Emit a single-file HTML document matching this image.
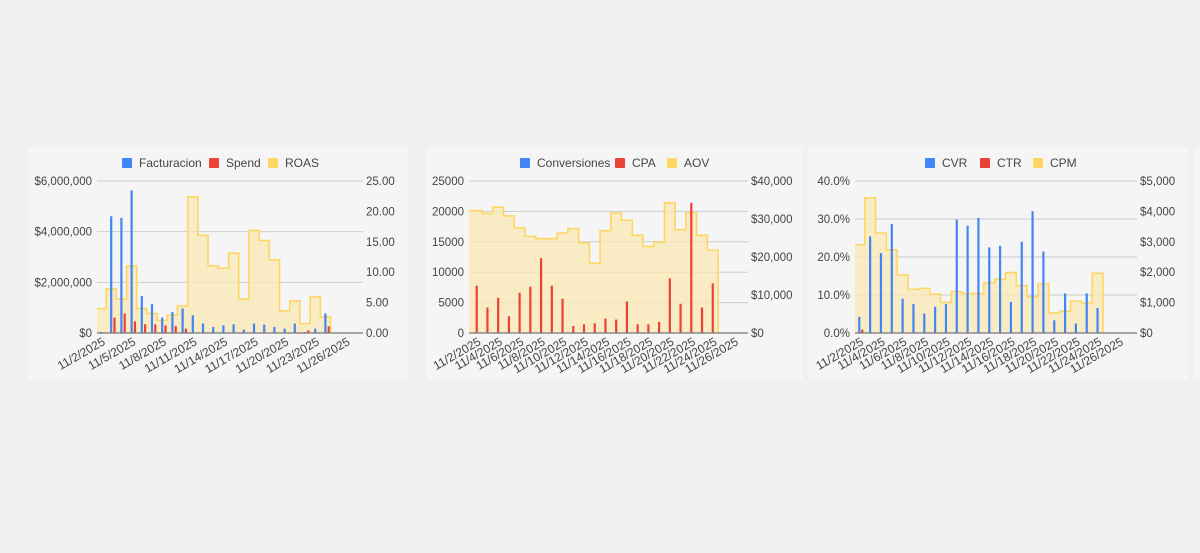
<!DOCTYPE html>
<html><head><meta charset="utf-8">
<style>
html,body{margin:0;padding:0;background:#f0f0f0;width:1200px;height:553px;overflow:hidden}
svg{position:absolute;left:0;top:0}
text{font-family:"Liberation Sans",sans-serif;fill:#444;font-size:11.5px}
</style></head><body>
<svg id="s" width="1200" height="553" xmlns="http://www.w3.org/2000/svg">
<rect x="28" y="147" width="380" height="233" fill="#f5f5f5"/>
<rect x="427" y="147" width="376" height="233" fill="#f5f5f5"/>
<rect x="808" y="147" width="380" height="233" fill="#f5f5f5"/>
<rect x="1194" y="147" width="6" height="233" fill="#f5f5f5"/>
</svg>
<script>
const s=document.getElementById('s');
let h='';
function T(x,y,t,a,extra){h+=`<text x="${x}" y="${y}" text-anchor="${a||'start'}" ${extra||''}>${t}</text>`;}
function chart(c){
  const top=181,bot=333;
  c.lt.forEach((t,k)=>{const y=top+(bot-top)*k/(c.lt.length-1);h+=`<line x1="${c.x0}" x2="${c.x1}" y1="${y}" y2="${y}" stroke="#ccc" stroke-width="1"/>`;T(c.x0-5,y+4,t,'end');});
  c.rt.forEach((t,k)=>{const y=top+(bot-top)*k/(c.rt.length-1);T(c.x1+3,y+4,t,'start');});
  const w=c.dx;let d=`M${c.x0} ${bot}`;
  c.area.forEach((v,i)=>{const xl=i==0?c.x0:c.c0+w*i-w/2, xr=c.c0+w*i+w/2;const y=bot-(bot-top)*v;d+=` L${xl} ${y} L${xr} ${y}`;});
  const xe=c.c0+w*(c.area.length-1)+w/2;
  h+=`<path d="${d} L${xe} ${bot} Z" fill="#f9e8b4" fill-opacity="0.75"/>`;
  let l='';c.area.forEach((v,i)=>{const xl=i==0?c.x0:c.c0+w*i-w/2, xr=c.c0+w*i+w/2;const y=bot-(bot-top)*v;l+=(i==0?'M':' L')+`${xl} ${y} L${xr} ${y}`;});
  h+=`<path d="${l} L${xe} ${bot}" fill="none" stroke="#fdd663" stroke-width="1.6"/>`;
  c.blue.forEach((v,i)=>{if(v<=0)return;const x=c.c0+w*i;const y=bot-(bot-top)*v;h+=`<rect x="${x-1.1}" y="${y}" width="2.2" height="${bot-y}" fill="#4285f4"/>`;});
  c.red.forEach((v,i)=>{if(v<=0)return;const x=c.c0+w*i+c.ro;const y=bot-(bot-top)*v;h+=`<rect x="${x-1.1}" y="${y}" width="2.2" height="${bot-y}" fill="#ea4335"/>`;});
  h+=`<line x1="${c.x0}" x2="${c.x1}" y1="${bot}" y2="${bot}" stroke="#777" stroke-width="1.2"/>`;
  for(let i=0;i<=24;i+=c.step){const x=c.c0+w*i+5;T(x,bot+11,`11/${i+2}/2025`,'end',`style="font-size:12px" transform="rotate(-30 ${x} ${bot+11})"`);}
  c.leg.forEach(g=>{h+=`<rect x="${g[0]}" y="158" width="10" height="10" rx="1" fill="${g[1]}"/>`;T(g[0]+17,167,g[2],'start','style="font-size:12px"');});
}
const Y=(arr)=>arr.map(y=>(578-y)/453);
chart({x0:97,x1:363,c0:101,dx:10.2,ro:3.3,step:3,
 lt:['$6,000,000','$4,000,000','$2,000,000','$0'],rt:['25.00','20.00','15.00','10.00','5.00','0.00'],
 blue:Y([575,230,235,153,468,492,532,515,505,525,550,560,555,552,568,550,553,560,565,550,575,565,520]),
 red:Y([578,532,520,543,552,552,555,557,565,578,578,578,578,578,578,578,578,578,578,576,570,576,558]),
 area:Y([505,447,477,378,505,520,540,525,497,172,287,378,385,340,477,272,302,360,512,482,550,470,530]),
 leg:[[122,'#4285f4','Facturacion'],[209,'#ea4335','Spend'],[268,'#fdd663','ROAS']]});
chart({x0:469,x1:748,c0:476.7,dx:10.73,ro:0,step:2,
 lt:['25000','20000','15000','10000','5000','0'],rt:['$40,000','$30,000','$20,000','$10,000','$0'],
 blue:[],
 red:Y([437,502,473,528,458,440,355,437,476,557,552,549,535,538,484,552,552,545,415,491,190,502,430]),
 area:Y([213,222,203,229,265,290,297,297,280,267,310,370,273,220,242,287,320,307,190,270,220,287,331]),
 leg:[[520,'#4285f4','Conversiones'],[615,'#ea4335','CPA'],[667,'#fdd663','AOV']]});
chart({x0:855,x1:1137,c0:859.3,dx:10.83,ro:3,step:2,
 lt:['40.0%','30.0%','20.0%','10.0%','0.0%'],rt:['$5,000','$4,000','$3,000','$2,000','$1,000','$0'],
 blue:Y([530,290,340,253,476,492,520,500,492,240,258,235,323,318,485,306,215,335,540,460,550,460,503]),
 red:Y([568]),
 area:Y([315,175,280,330,405,448,445,462,487,455,460,460,428,418,398,437,470,432,518,513,483,488,400]),
 leg:[[925,'#4285f4','CVR'],[980,'#ea4335','CTR'],[1033,'#fdd663','CPM']]});
s.insertAdjacentHTML('beforeend',h);
</script>
</body></html>
